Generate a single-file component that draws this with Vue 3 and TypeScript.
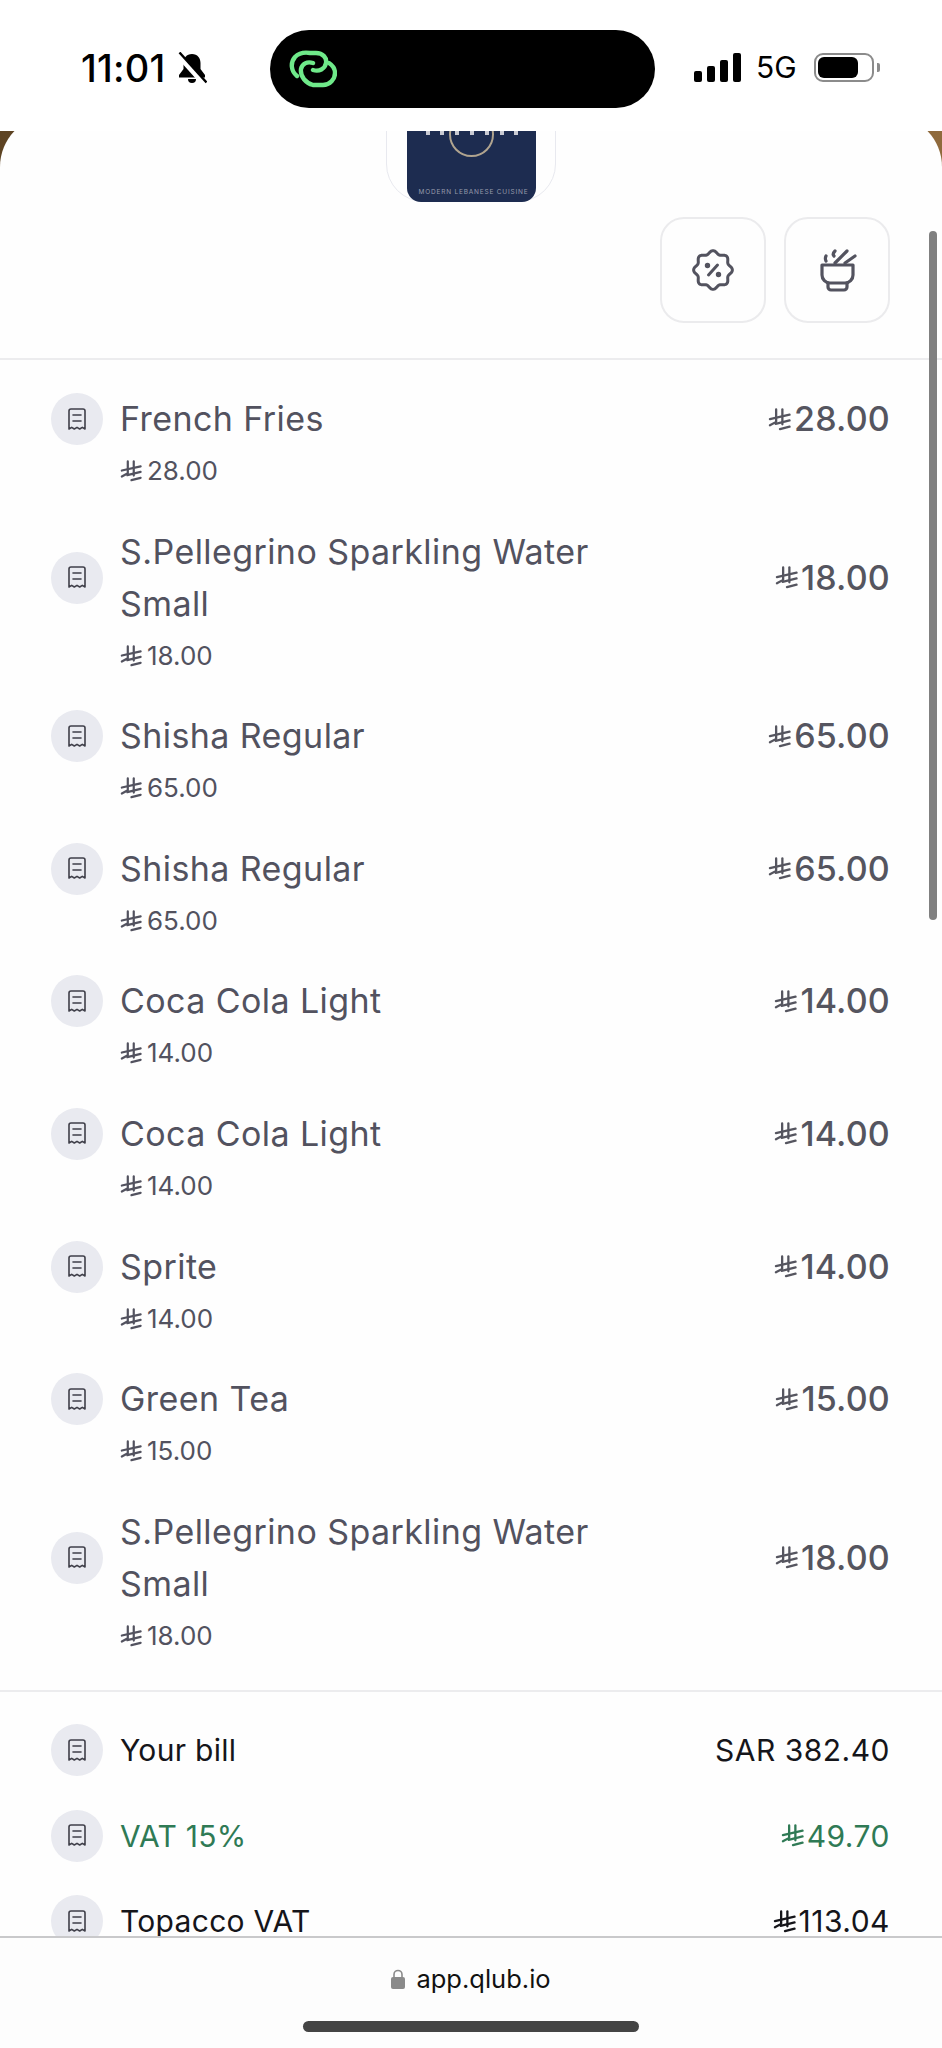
<script setup lang="ts">
interface Item {
  name: string
  price: string
}

const items: Item[] = [
  { name: 'French Fries', price: '28.00' },
  { name: 'S.Pellegrino Sparkling Water Small', price: '18.00' },
  { name: 'Shisha Regular', price: '65.00' },
  { name: 'Shisha Regular', price: '65.00' },
  { name: 'Coca Cola Light', price: '14.00' },
  { name: 'Coca Cola Light', price: '14.00' },
  { name: 'Sprite', price: '14.00' },
  { name: 'Green Tea', price: '15.00' },
  { name: 'S.Pellegrino Sparkling Water Small', price: '18.00' },
]

const summary = [
  { label: 'Your bill', value: 'SAR 382.40', riyal: false, green: false },
  { label: 'VAT 15%', value: '49.70', riyal: true, green: true },
  { label: 'Topacco VAT', value: '113.04', riyal: true, green: false },
]

// scalloped badge outline, 8 lobes
function badgePath(): string {
  const pts: string[] = []
  for (let i = 0; i < 96; i++) {
    const a = (i / 96) * Math.PI * 2
    const r = 17.8 + 1.6 * Math.cos(8 * a)
    const x = 22 + r * Math.sin(a)
    const y = 22 - r * Math.cos(a)
    pts.push(`${x.toFixed(2)} ${y.toFixed(2)}`)
  }
  return `M${pts.join('L')}Z`
}
const badge = badgePath()
</script>

<template>
  <div class="phone">
    <svg width="0" height="0" class="defs">
      <symbol id="riyal" viewBox="0 0 24 24">
        <g fill="none" stroke="currentColor" stroke-width="2.4" stroke-linecap="round">
          <path d="M8.500 1.500V14.500L2 18" />
          <path d="M15 1.500V17" />
          <path d="M2 11.500L22.500 7" />
          <path d="M8 16.500L22.500 13" />
          <path d="M12.500 22L22.500 19.500" />
        </g>
      </symbol>
      <symbol id="receipt" viewBox="0 0 18 23">
        <g fill="none" stroke="currentColor" stroke-width="1.6" stroke-linejoin="round" stroke-linecap="round">
          <path d="M1 21V3a2 2 0 0 1 2-2h12a2 2 0 0 1 2 2v18l-2.700-1.600-2.600 1.600-2.700-1.600-2.700 1.600-2.600-1.600z" />
          <path d="M5 7h8M5 13h8" />
        </g>
      </symbol>
    </svg>

    <header class="status">
      <div class="time-group">
        <span class="time">11:01</span>
        <svg class="bell" viewBox="0 0 30 32" width="30" height="32">
          <path d="M15 2c-5.500 0-8.500 4-8.500 9v6L2 23v2.500h26V23l-4.500-6v-6c0-5-3-9-8.500-9z" fill="#000" />
          <path d="M11 27a4 4 0 0 0 8 0z" fill="#000" />
          <path d="M1 3l26 29" stroke="#fff" stroke-width="5" />
          <path d="M2.500 0.500l27 30" stroke="#000" stroke-width="2.400" />
        </svg>
      </div>
      <div class="island">
        <svg viewBox="0 0 49 38" width="49" height="38">
          <g fill="none" stroke="#6fe98a" stroke-width="4.400" stroke-linecap="round">
            <path d="M9 26C3 21 2 13 7 7c4-4 9-5 15-4h6c7 0 11 5 10 10-1 6-7 9-13 7" />
            <path d="M25 13c-6-2-11 1-12 6-1 8 5 14 12 16h10c7 0 12-6 12-12 0-5-3-8-6-10" />
          </g>
        </svg>
      </div>
      <div class="indicators">
        <div class="signal"><i class="b1" /><i class="b2" /><i class="b3" /><i class="b4" /></div>
        <span class="net">5G</span>
        <div class="battery"><i /></div>
        <div class="nub" />
      </div>
    </header>

    <main class="content">
      <div class="card">
        <div class="logo">
          <div class="poster">
            <div class="ring" />
            <div class="dots">
              <i v-for="n in 7" :key="n" />
            </div>
            <span class="tagline">MODERN LEBANESE CUISINE</span>
          </div>
        </div>

        <div class="actions">
          <button class="action" type="button" aria-label="Offers">
            <svg viewBox="0 0 44 44" width="44" height="44" fill="none" stroke="#53535f" stroke-width="3" stroke-linejoin="round" stroke-linecap="round">
              <path :d="badge" />
              <path d="M17.500 27l9-10" />
              <circle cx="16.500" cy="17.500" r="1.200" fill="#53535f" />
              <circle cx="27.500" cy="26.500" r="1.200" fill="#53535f" />
            </svg>
          </button>
          <button class="action" type="button" aria-label="Kitchen">
            <svg viewBox="0 0 40 44" width="40" height="44" fill="none" stroke="#53535f" stroke-width="3.200" stroke-linejoin="round" stroke-linecap="round">
              <path d="M5 17h31v10a8 8 0 0 1-8 8H13a8 8 0 0 1-8-8z" />
              <path d="M11 35v4a3 3 0 0 0 3 3h13a3 3 0 0 0 3-3v-4" />
              <path d="M18 15L30 3M28 15L38 8" />
              <path d="M9 13c-1-2-1-3 0-5M17 8c-1-1-1-3 1-5" />
            </svg>
          </button>
        </div>

        <section class="items">
          <div v-for="(item, i) in items" :key="i" class="item">
            <div class="item-main">
              <span class="dot"><svg width="18" height="23"><use href="#receipt" /></svg></span>
              <div class="item-name">{{ item.name }}</div>
              <div class="item-price">
                <svg class="riyal-md"><use href="#riyal" /></svg>{{ item.price }}
              </div>
            </div>
            <div class="item-unit">
              <svg class="riyal-sm"><use href="#riyal" /></svg>{{ item.price }}
            </div>
          </div>
        </section>

        <section class="summary">
          <div v-for="row in summary" :key="row.label" class="sum-row" :class="{ green: row.green }">
            <span class="dot"><svg width="18" height="23"><use href="#receipt" /></svg></span>
            <span class="sum-label">{{ row.label }}</span>
            <span class="sum-value">
              <svg v-if="row.riyal" class="riyal-md"><use href="#riyal" /></svg>{{ row.value }}
            </span>
          </div>
        </section>
      </div>
      <div class="scrollbar" />
    </main>

    <footer class="browser">
      <div class="url">
        <svg viewBox="0 0 14 20" width="14" height="20">
          <path d="M3 9V5.500a4 4 0 0 1 8 0V9" fill="none" stroke="#8a8a8a" stroke-width="1.600" />
          <rect y="8" width="14" height="12" rx="2" fill="#8a8a8a" />
        </svg>
        <span>app.qlub.io</span>
      </div>
      <div class="home" />
    </footer>
  </div>
</template>

<style scoped>
.phone {
  width: 942px;
  height: 2048px;
  display: flex;
  flex-direction: column;
  overflow: hidden;
  background: #fff;
  font-family: Inter, "Liberation Sans", sans-serif;
}
.defs {
  position: absolute;
}

.status {
  height: 131px;
  flex: none;
  display: flex;
  align-items: flex-start;
  background: #fff;
  position: relative;
  z-index: 2;
}
.time-group {
  width: 270px;
  padding: 46px 0 0 81px;
  box-sizing: border-box;
  display: flex;
  align-items: center;
  gap: 12px;
}
.time {
  font-size: 38px;
  line-height: 44px;
  font-weight: 500;
  color: #000;
  letter-spacing: 0.2px;
}
.island {
  width: 385px;
  height: 78px;
  margin-top: 30px;
  background: #000;
  border-radius: 39px;
  display: flex;
  align-items: center;
  padding-left: 18px;
  box-sizing: border-box;
}
.indicators {
  margin: 53px 0 0 39px;
  height: 29px;
  display: flex;
  align-items: center;
}
.signal {
  display: flex;
  align-items: flex-end;
  gap: 5px;
  height: 29px;
}
.signal i {
  width: 8px;
  background: #000;
  border-radius: 2px;
}
.b1 { height: 11px; }
.b2 { height: 16px; }
.b3 { height: 22px; }
.b4 { height: 29px; }
.net {
  margin-left: 15px;
  font-size: 30px;
  line-height: 29px;
  font-weight: 400;
  color: #000;
}
.battery {
  margin-left: 17px;
  width: 60px;
  height: 29px;
  box-sizing: border-box;
  border: 2px solid #8b8b8b;
  border-radius: 9px;
  padding: 2px;
  display: flex;
}
.battery i {
  width: 40px;
  background: #000;
  border-radius: 6px;
}
.nub {
  margin-left: 3px;
  width: 3px;
  height: 9px;
  background: #8b8b8b;
  border-radius: 0 2px 2px 0;
}

.content {
  flex: 1;
  min-height: 0;
  position: relative;
  overflow: hidden;
  background: linear-gradient(90deg, #5d4322, #8f6a3c);
}
.card {
  height: 100%;
  margin-top: -16px;
  padding-top: 16px;
  background: #fefefe;
  border-radius: 52px 52px 0 0;
  display: flex;
  flex-direction: column;
}
.logo {
  margin: -50px auto 0;
  width: 170px;
  height: 121px;
  flex: none;
  box-sizing: border-box;
  border: 1px solid #e8e9ef;
  border-radius: 0 0 38px 38px;
  display: flex;
  justify-content: center;
}
.poster {
  width: 129px;
  height: 120px;
  background: #1d2c50;
  border-radius: 0 0 14px 14px;
  position: relative;
  overflow: hidden;
}
.ring {
  position: absolute;
  left: 42px;
  bottom: 45px;
  width: 45px;
  height: 45px;
  box-sizing: border-box;
  border: 2px solid #b0a48f;
  border-radius: 50%;
}
.dots {
  position: absolute;
  left: 19px;
  right: 17px;
  top: 48px;
  display: flex;
  justify-content: space-between;
}
.dots i {
  width: 4px;
  height: 5px;
  background: #c9cad2;
}
.tagline {
  position: absolute;
  left: 5px;
  right: 0;
  bottom: 5px;
  text-align: center;
  font-size: 6.500px;
  line-height: 9px;
  letter-spacing: 0.8px;
  color: #969bab;
  white-space: nowrap;
}

.actions {
  flex: none;
  display: flex;
  justify-content: flex-end;
  gap: 18px;
  padding: 15px 52px 0 0;
  height: 106px;
}
.action {
  width: 106px;
  height: 106px;
  box-sizing: border-box;
  background: transparent;
  border: 2px solid #ebebed;
  border-radius: 24px;
  padding: 0;
  display: flex;
  align-items: center;
  justify-content: center;
}

.items {
  margin-top: 35px;
  border-top: 2px solid #ececee;
  padding: 33px 52px 0 51px;
  border-bottom: 2px solid #ececee;
}
.item {
  margin-bottom: 28.600px;
}
.item-main {
  display: flex;
  align-items: center;
}
.dot {
  flex: none;
  width: 52px;
  height: 52px;
  border-radius: 50%;
  background: #e9eaf0;
  color: #3f3f49;
  display: flex;
  align-items: center;
  justify-content: center;
}
.item-name {
  flex: 1;
  margin-left: 17px;
  padding-right: 150px;
  font-size: 34px;
  line-height: 52px;
  color: #52525f;
  letter-spacing: 0.42px;
}
.item-unit {
  margin-left: 69px;
  font-size: 26px;
  line-height: 52px;
  color: #52525f;
  display: flex;
  align-items: center;
}
.item-price {
  font-size: 34px;
  line-height: 52px;
  font-weight: 500;
  letter-spacing: 0.2px;
  color: #55555f;
  display: flex;
  align-items: center;
}
.riyal-sm {
  width: 22px;
  height: 22px;
  margin-right: 5px;
}
.riyal-md {
  width: 23px;
  height: 23px;
  margin-right: 3px;
}

.summary {
  padding: 32px 52px 0 51px;
}
.sum-row {
  display: flex;
  align-items: center;
  height: 52px;
  margin-bottom: 33.500px;
  color: #15151a;
  font-size: 30px;
  letter-spacing: 0.3px;
}
.sum-row.green {
  color: #2f7a55;
}
.sum-label {
  flex: 1;
  margin-left: 17px;
}
.sum-value {
  display: flex;
  align-items: center;
  font-weight: 400;
  letter-spacing: 0.5px;
}

.scrollbar {
  position: absolute;
  left: 929px;
  top: 100px;
  width: 8px;
  height: 689px;
  border-radius: 4px;
  background: #808080;
}

.browser {
  height: 112px;
  flex: none;
  background: #fdfdfd;
  border-top: 2px solid #c9c9cb;
  box-sizing: border-box;
  display: flex;
  flex-direction: column;
  align-items: center;
  position: relative;
  z-index: 2;
}
.url {
  margin-top: 24px;
  display: flex;
  align-items: center;
  gap: 11px;
  font-size: 25.500px;
  line-height: 34px;
  color: #111;
}
.home {
  margin-top: 25px;
  width: 336px;
  height: 11px;
  border-radius: 6px;
  background: #444;
}
</style>
